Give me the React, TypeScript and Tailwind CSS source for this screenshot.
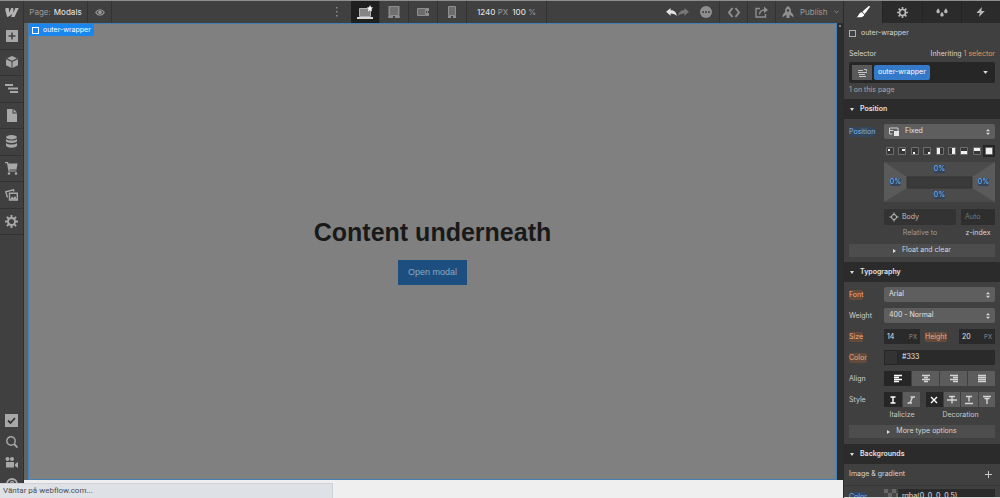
import React from 'react'

type IconProps = { className?: string }

const LogoIcon = () => (
  <svg viewBox="0 0 24 16" className="w-[14px] h-[9px]" fill="#b5b5b5">
    <path d="M24 0 16.400 16H10.500L12.800 9.500C10.800 12.700 7.500 15.200 3.200 16L0 3C0 1 1 0 2 0H6.200L7 8.600 10.500 0H14.300L14.500 8.600 18 0z" />
  </svg>
)

const EyeIcon = () => (
  <svg viewBox="0 0 20 14" className="w-[10px] h-[7px]" fill="none" stroke="#9a9a9a" strokeWidth="2.400">
    <path d="M1.500 7C4 3 7 1.500 10 1.500S16 3 18.500 7C16 11 13 12.500 10 12.500S4 11 1.500 7z" />
    <circle cx="10" cy="6.500" r="2.500" fill="#9a9a9a" />
  </svg>
)

const DotsIcon = () => (
  <svg viewBox="0 0 4 12" className="w-1 h-3" fill="#8a8a8a">
    <path d="M1 1h1.500v1.500H1zM1 5h1.500v1.500H1zM1 9h1.500v1.500H1z" />
  </svg>
)

const LaptopIcon = () => (
  <svg viewBox="0 0 16 16" className="w-4 h-4">
    <path d="M2.500 4.500h11v8h-11z" fill="#858585" stroke="#b0b0b0" />
    <path d="M0 13h16v2H0z" fill="#d8d8d8" />
    <path d="M13 1l1 2.200 2 .3-1.500 1.600.4 2.300L13 6.300l-2 1.100.4-2.300L10 3.500l2-.3z" fill="#fff" />
  </svg>
)

const TabletIcon = () => (
  <svg viewBox="0 0 12 12" className="w-3 h-3">
    <path d="M1.500.5h9v9h-9z" fill="#707070" stroke="#8e8e8e" />
    <path d="M.5 0h1v12h-1zM10.500 0h1v12h-1z" fill="#8e8e8e" />
    <path d="M.5 10H5v2H.5zM7 10h4.500v2H7z" fill="#8e8e8e" />
  </svg>
)

const LandscapeIcon = () => (
  <svg viewBox="0 0 12 8" className="w-3 h-2">
    <path d="M.5.500h8v7h-8z" fill="#6c6c6c" stroke="#8e8e8e" />
    <path d="M9 0h3v3H9zM9 5h3v3H9z" fill="#8e8e8e" />
    <path d="M10 3h1v2h-1z" fill="#8e8e8e" />
  </svg>
)

const PhoneIcon = () => (
  <svg viewBox="0 0 8 12" className="w-2 h-3">
    <path d="M.5.500h7v9h-7z" fill="#6c6c6c" stroke="#8e8e8e" />
    <path d="M0 10h3v2H0zM5 10h3v2H5z" fill="#8e8e8e" />
  </svg>
)

const UndoIcon = ({ className }: IconProps) => (
  <svg viewBox="0 0 12 10" className={`w-[11px] h-[9px] ${className}`} fill="currentColor">
    <path d="M5 0v2.500c4 0 6.500 2 7 6.500C10.500 7 8.500 6 5 6v2.500L0 4.200z" />
  </svg>
)

const MoreIcon = () => (
  <svg viewBox="0 0 12 12" className="w-3 h-3">
    <circle cx="6" cy="6" r="6" fill="#8e8e8e" />
    <path d="M2.300 5.200h1.700v1.700H2.300zM5.200 5.200h1.700v1.700H5.200zM8.100 5.200h1.700v1.700H8.100z" fill="#404040" />
  </svg>
)

const CodeIcon = () => (
  <svg viewBox="0 0 14 11" className="w-[14px] h-[11px]" fill="none" stroke="#8e8e8e" strokeWidth="2">
    <path d="M5.500 1 2 5.500 5.500 10M8.500 1 12 5.500 8.500 10" />
  </svg>
)

const ShareIcon = () => (
  <svg viewBox="0 0 13 12" className="w-[13px] h-3" fill="none" stroke="#8e8e8e" strokeWidth="1.400">
    <path d="M5 2.500H1v8.500h9.500V8" />
    <path d="M4.500 8.500C4.800 5.500 6.500 4 9.500 4" />
    <path d="M9 .5 13 4 9 7.300z" fill="#8e8e8e" stroke="none" />
  </svg>
)

const RocketIcon = () => (
  <svg viewBox="0 0 12 12" className="w-3 h-3" fill="#8e8e8e">
    <path d="M6 0C8 1.200 9 3 9 5v1l2.500 3v2.500L9 9.500 7.500 9v3h-3V9L3 9.500.5 11.500V9L3 6V5c0-2 1-3.800 3-5z" />
    <circle cx="6" cy="4.500" r="1.200" fill="#404040" />
  </svg>
)

const BrushIcon = () => (
  <svg viewBox="0 0 14 12" className="w-[14px] h-3" fill="#fff">
    <path d="M13.500 0 14 .8 8.800 8 6.300 5.800 12.500.2z" />
    <path d="M5.800 6.200 8.300 8.500c0 2-2.800 3.300-7.800 2.700C3 10 2.500 6.600 5.800 6.200z" />
  </svg>
)

const GearIcon = ({ className }: IconProps) => (
  <svg viewBox="0 0 24 24" className={className} fill="none" stroke="currentColor">
    <circle cx="12" cy="12" r="6.500" strokeWidth="3.600" />
    <path
      strokeWidth="3.600"
      d="M12 0v5M12 19v5M0 12h5M19 12h5M3.500 3.500 7 7M17 17l3.500 3.500M20.500 3.500 17 7M7 17l-3.500 3.500"
    />
  </svg>
)

const DropsIcon = () => (
  <svg viewBox="0 0 14 10" className="w-3 h-[9px]" fill="#b8b8b8">
    <path d="M2.500 0C3.500 1.500 4.500 2.600 4.500 4a2 2 0 0 1-4 0C.5 2.600 1.500 1.500 2.500 0z" />
    <path d="M7 4c1 1.500 2 2.500 2 3.800a2 2 0 0 1-4 0C5 6.500 6 5.500 7 4z" />
    <path d="M11.500 0c1 1.500 2 2.600 2 4a2 2 0 0 1-4 0c0-1.400 1-2.500 2-4z" />
  </svg>
)

const BoltIcon = () => (
  <svg viewBox="0 0 10 11" className="w-[9px] h-[10px]" fill="#b8b8b8">
    <path d="M6.500 0 .5 6.500h3.700L3.300 11 9.800 4.500H6z" />
  </svg>
)

const AddIcon = () => (
  <svg viewBox="0 0 12 12" className="w-3 h-3">
    <path d="M0 0h12v12H0z" fill="#a8a8a8" />
    <path d="M6 2.500v7M2.500 6h7" stroke="#404040" strokeWidth="1.500" />
  </svg>
)

const CubeIcon = () => (
  <svg viewBox="0 0 12 12" className="w-3 h-3" fill="#a8a8a8">
    <path d="M6 0l5 2.300L6 4.700 1 2.300z" />
    <path d="M0 3.300l5.500 2.500V12L0 9.300zM12 3.300 6.500 5.800V12L12 9.300z" />
  </svg>
)

const NavigatorIcon = () => (
  <svg viewBox="0 0 13 9" className="w-[13px] h-[9px]" fill="#a8a8a8">
    <path d="M0 0h8v2H0zM3 3.500h10v2H3zM5 7h8v2H5z" />
  </svg>
)

const PageIcon = () => (
  <svg viewBox="0 0 10 13" className="w-[10px] h-[13px]" fill="#a8a8a8">
    <path d="M0 0h5.500v4.500H10V13H0z" />
    <path d="M6.500 0 10 3.500H6.500z" />
  </svg>
)

const DatabaseIcon = () => (
  <svg viewBox="0 0 11 13" className="w-[11px] h-[13px]" fill="#a8a8a8">
    <ellipse cx="5.500" cy="2.200" rx="5.500" ry="2.200" />
    <path d="M0 4c2 2 9 2 11 0v2.200c-1 2.300-10 2.300-11 0z" />
    <path d="M0 8c2 2 9 2 11 0v2.500c-1 3-10 3-11 0z" />
  </svg>
)

const CartIcon = () => (
  <svg viewBox="0 0 13 13" className="w-[13px] h-[13px]" fill="#a8a8a8">
    <path d="M0 0h3l.5 1.500H12.500L11.500 7.500H4.500L4.700 8.500H11.500V9.500H3.500L2 1.300H0z" />
    <circle cx="4" cy="11.500" r="1.300" />
    <circle cx="11" cy="11.500" r="1.300" />
  </svg>
)

const AssetsIcon = () => (
  <svg viewBox="0 0 13 12" className="w-[13px] h-3" fill="none" stroke="#a8a8a8" strokeWidth="1.400">
    <path d="M4.500 4.200h7.800v6.800H4.500z" />
    <path d="M2.500 8.500.8 2.800 8.500.8l.5 1.700" />
    <path d="M5 10.500l2-3 1.500 1.500 1.500-2 2 3.500z" fill="#a8a8a8" stroke="none" />
  </svg>
)

const CheckIcon = () => (
  <svg viewBox="0 0 13 13" className="w-[13px] h-[13px]">
    <path d="M0 0h13v13H0z" fill="#a8a8a8" />
    <path d="M3 6.500 5.500 9 10 4" fill="none" stroke="#333" strokeWidth="1.800" />
  </svg>
)

const SearchIcon = () => (
  <svg viewBox="0 0 12 12" className="w-3 h-3" fill="none" stroke="#a8a8a8" strokeWidth="1.400">
    <circle cx="5" cy="5" r="4.200" />
    <path d="M8 8l3.500 3.500" strokeWidth="1.800" />
  </svg>
)

const CameraIcon = () => (
  <svg viewBox="0 0 13 11" className="w-[13px] h-[11px]" fill="#a8a8a8">
    <circle cx="2.500" cy="2" r="2" />
    <circle cx="7" cy="2" r="2" />
    <path d="M1 5h8v5.500H1zM10 7l3-2v6l-3-2z" />
  </svg>
)

const HelpIcon = () => (
  <svg viewBox="0 0 12 12" className="w-3 h-3" fill="none" stroke="#a8a8a8">
    <circle cx="6" cy="6" r="5" strokeWidth="2" />
    <path d="M4.500 5c0-2 3-2 3 0 0 1-1.500 1-1.500 2.500" strokeWidth="1.300" />
  </svg>
)

const PositionIcon = () => (
  <svg viewBox="0 0 10 9" className="w-[10px] h-[9px]">
    <path d="M.5 1h8.500v3M.5 1v6h3M.5 3.500h4" fill="none" stroke="#cfcfcf" />
    <path d="M5 4h5v5H5z" fill="#e6e6e6" />
  </svg>
)

const SelectorIcon = () => (
  <svg viewBox="0 0 9 8" className="w-[9px] h-2" fill="none" stroke="#c4c4c4">
    <path d="M0 1.500h5M0 3.500h9M1 5.500h6M1 7.500h7" />
    <path d="M6 .5h2.500v2" />
  </svg>
)

const ArrowsIcon = () => (
  <svg viewBox="0 0 4 6" className="w-1 h-[6px] shrink-0" fill="#d8d8d8">
    <path d="M2 0l2 2.300H0zM2 6 0 3.700h4z" />
  </svg>
)

const leftItems = [
  { name: 'Add', icon: <AddIcon /> },
  { name: 'Symbols', icon: <CubeIcon /> },
  { name: 'Navigator', icon: <NavigatorIcon /> },
  { name: 'Pages', icon: <PageIcon /> },
  { name: 'CMS', icon: <DatabaseIcon /> },
  { name: 'Ecommerce', icon: <CartIcon /> },
  { name: 'Assets', icon: <AssetsIcon /> },
  { name: 'Settings', icon: <GearIcon className="w-[13px] h-[13px] text-[#a8a8a8]" /> },
]

const bottomItems = [
  { name: 'Audit', icon: <CheckIcon /> },
  { name: 'Search', icon: <SearchIcon /> },
  { name: 'Videos', icon: <CameraIcon /> },
  { name: 'Help', icon: <HelpIcon /> },
]

const devices = [
  { name: 'Desktop', icon: <LaptopIcon /> },
  { name: 'Tablet', icon: <TabletIcon /> },
  { name: 'Mobile landscape', icon: <LandscapeIcon /> },
  { name: 'Mobile portrait', icon: <PhoneIcon /> },
]

const panelTabs = [
  { name: 'Style', icon: <BrushIcon /> },
  { name: 'Element settings', icon: <GearIcon className="w-[11px] h-[11px] text-[#b8b8b8]" /> },
  { name: 'Style manager', icon: <DropsIcon /> },
  { name: 'Interactions', icon: <BoltIcon /> },
]

// filled part of each position preset
const presets = [
  { name: 'Top left', d: 'M2 2h2v2H2z' },
  { name: 'Top right', d: 'M4 2h3v2H4z' },
  { name: 'Bottom left', d: 'M2 5h2v2H2z' },
  { name: 'Bottom right', d: 'M5 5h2v2H5z' },
  { name: 'Left', d: 'M1 1h3v6H1z' },
  { name: 'Right', d: 'M4 1h3v6H4z' },
  { name: 'Bottom', d: 'M1 4h6v3H1z' },
  { name: 'Top', d: 'M1 1h6v3H1z' },
  { name: 'Full', d: 'M1 1h6v6H1z' },
]

const aligns = [
  { name: 'Left', d: 'M0 .5h8M0 2.500h5M0 4.500h8M0 6.500h5' },
  { name: 'Center', d: 'M0 .5h8M2 2.500h4M0 4.500h8M2 6.500h4' },
  { name: 'Right', d: 'M0 .5h8M3 2.500h5M0 4.500h8M3 6.500h5' },
  { name: 'Justify', d: 'M0 .5h8M0 2.500h8M0 4.500h8M0 6.500h8' },
]

const italics = [
  { name: 'Regular', d: 'M1.500 1h5M4 1v6M1.500 7h5' },
  { name: 'Italic', d: 'M3.500 1H8M5.500 1 3 7M.5 7H5' },
]

const decorations = [
  { name: 'None', d: 'M1 1l6 6M7 1 1 7' },
  { name: 'Strikethrough', d: 'M1 .5h6M4 .5v7M-1 4h10' },
  { name: 'Underline', d: 'M1 .5h6M4 .5v5M0 7.500h8' },
  { name: 'Overline', d: 'M0 .5h8M1.500 2.500h5M4 2.500V8' },
]

const IconGroup = ({ items, active = 0, label }: { items: { name: string; d: string }[]; active?: number; label: string }) => (
  <div role="group" aria-label={label} className="flex w-full h-full gap-px">
    {items.map((item, i) => (
      <button
        key={item.name}
        aria-label={item.name}
        className={`flex flex-1 items-center justify-center ${i === active ? 'bg-[#262626]' : 'bg-[#5c5c5c]'}`}
      >
        <svg viewBox="0 0 8 8" className="w-2 h-2 overflow-visible" fill="none" stroke={i === active ? '#fff' : '#d4d4d4'} strokeWidth="1.400">
          <path d={item.d} />
        </svg>
      </button>
    ))}
  </div>
)

const SectionHeader = ({ title }: { title: string }) => (
  <h2>
    <button className="flex w-full h-5 items-center gap-[6px] bg-[#2b2b2b] px-[6px] text-[7px] font-semibold text-[#e2e2e2]">
      <svg viewBox="0 0 4 3" className="w-1 h-[3px]" fill="#ddd"><path d="M0 0h4L2 3z" /></svg>
      {title}
    </button>
  </h2>
)

const MoreButton = ({ title }: { title: string }) => (
  <button className="flex w-full h-[13px] items-center justify-center gap-[6px] bg-[#4d4d4d] text-[7px] text-[#d6d6d6]">
    <svg viewBox="0 0 3 4" className="w-[3px] h-1" fill="#ddd"><path d="M0 0v4l3-2z" /></svg>
    {title}
  </button>
)

const Label = ({ htmlFor, color, children }: { htmlFor?: string; color?: 'blue' | 'orange'; children: string }) => {
  const tint =
    color === 'blue' ? 'bg-[#32465c] text-[#80b4ee]' : color === 'orange' ? 'bg-[#644a3a] text-[#f0a67c]' : 'text-[#cfcfcf]'
  return (
    <label htmlFor={htmlFor} className={`rounded-xs leading-[10px] ${tint}`}>
      {children}
    </label>
  )
}

const Row = ({ label, children }: { label: React.ReactNode; children: React.ReactNode }) => (
  <div className="flex h-[15px] items-center">
    <div className="w-[35px] shrink-0 flex">{label}</div>
    <div className="flex flex-1 min-w-0 h-full">{children}</div>
  </div>
)

const SelectBox = ({ id, value, icon }: { id: string; value: string; icon?: React.ReactNode }) => (
  <div className="flex flex-1 min-w-0 items-center gap-[6px] rounded-xs bg-[#5e5e5e] px-[5px] text-[#e2e2e2]">
    {icon}
    <select id={id} className="flex-1 min-w-0 h-full appearance-none bg-transparent outline-none">
      <option>{value}</option>
    </select>
    <ArrowsIcon />
  </div>
)

const NumberBox = ({ id, value }: { id: string; value: string }) => (
  <div className="flex w-9 items-center bg-[#2a2a2a] px-[3px]">
    <input id={id} defaultValue={value} className="flex-1 min-w-0 h-full bg-transparent text-[#e2e2e2] outline-none" />
    <span className="text-[6px] text-[#8c8c8c]">PX</span>
  </div>
)

const TopBar = () => (
  <header className="flex flex-1 min-w-0 items-stretch bg-[#404040] text-[#9b9b9b]">
    <a href="#" aria-label="Dashboard" className="flex w-6 items-center justify-center border-r border-[#333]">
      <LogoIcon />
    </a>
    <button className="flex w-16 items-center justify-center gap-[3px] border-r border-[#333]">
      Page: <span className="font-medium text-[#dcdcdc]">Modals</span>
    </button>
    <button aria-label="Preview" className="flex w-6 items-center justify-center border-r border-[#333]">
      <EyeIcon />
    </button>
    <div className="flex flex-1 justify-end">
      <button aria-label="More breakpoints" className="flex w-7 items-center justify-center">
        <DotsIcon />
      </button>
      {devices.map((device, i) => (
        <button
          key={device.name}
          aria-label={device.name}
          className={`flex w-[29px] items-center justify-center border-r border-[#333] ${i === 0 ? 'bg-[#1f1f1f]' : ''}`}
        >
          {device.icon}
        </button>
      ))}
      <button className="flex w-20 items-center justify-center gap-1 border-r border-[#333]">
        <span><span className="font-medium text-[#dcdcdc]">1240</span> PX</span>
        <span><span className="font-medium text-[#dcdcdc]">100</span> %</span>
      </button>
    </div>
    <div className="flex w-[296px] justify-end">
      <div className="flex w-8 items-center gap-px pl-[6px]">
        <button aria-label="Undo"><UndoIcon className="text-[#e4e4e4]" /></button>
        <button aria-label="Redo"><UndoIcon className="-scale-x-100 text-[#777]" /></button>
      </div>
      <button aria-label="Status" className="flex w-7 items-center justify-center border-r border-[#333]"><MoreIcon /></button>
      <button aria-label="Export code" className="flex w-7 items-center justify-center border-r border-[#333]"><CodeIcon /></button>
      <button aria-label="Share" className="flex w-7 items-center justify-center border-r border-[#333]"><ShareIcon /></button>
      <button className="flex w-[67px] items-center gap-[6px] pl-[6px]">
        <RocketIcon />
        Publish
        <svg viewBox="0 0 6 4" className="w-[5px] h-1" fill="none" stroke="#9b9b9b"><path d="M.5.500 3 3 5.500.5" /></svg>
      </button>
    </div>
  </header>
)

const LeftBar = () => (
  <nav className="flex w-6 shrink-0 flex-col justify-between border-r border-[#2a3036] bg-[#404040]">
    <div className="flex h-[212px] flex-col">
      {leftItems.map((item) => (
        <button key={item.name} aria-label={item.name} className="flex flex-1 items-center justify-center border-b border-[#333]">
          {item.icon}
        </button>
      ))}
    </div>
    <div className="flex flex-col pb-1">
      {bottomItems.map((item) => (
        <button key={item.name} aria-label={item.name} className="flex h-[21px] items-center justify-center">
          {item.icon}
        </button>
      ))}
    </div>
  </nav>
)

const Canvas = () => (
  <div className="flex flex-1 min-w-0 flex-col">
    <div className="flex flex-1 min-h-0 bg-[#646464] pl-1">
      <main className="relative flex flex-1 flex-col items-center justify-center gap-3 border border-[#4480b5] bg-[#808080] pb-[2px] font-['Liberation_Sans',sans-serif]">
        <div className="absolute left-0 top-0 flex h-3 items-center gap-1 bg-[#1a86ee] px-[3px] font-[Inter,sans-serif] text-[7px] text-white">
          <span className="w-[7px] h-[7px] border border-white" />
          outer-wrapper
        </div>
        <h1 className="text-[25px] leading-8 font-bold text-[#191919]">Content underneath</h1>
        <button className="h-[25px] bg-[#1c4f7f] px-[10px] text-[9px] text-[#8ea7bf]">Open modal</button>
      </main>
      <div className="flex w-[6px] justify-center bg-[#2b2d2e] pt-[2px]">
        <span className="w-[2px] h-[2px] bg-[#777]" />
      </div>
    </div>
    <div className="h-[18px] shrink-0 bg-[#efefef]" />
  </div>
)

const InsetBox = () => (
  <div className="relative h-10">
    <svg viewBox="0 0 111 40" preserveAspectRatio="none" className="w-full h-full">
      <path d="M0 0h111v40H0z" fill="#4b4b4b" />
      <path d="M0 0l23 15v11L0 40zM111 0 88 15v11l23 14z" fill="#5a5a5a" />
      <path d="M23 15h65v11H23z" fill="#3a3a3a" stroke="#333" />
    </svg>
    <div className="absolute inset-0 grid grid-cols-[23px_1fr_23px] grid-rows-[14px_12px_14px] place-items-center leading-[8px] text-[#86b8ee]">
      <button className="col-start-2 rounded-xs bg-[#30455c]">0%</button>
      <button className="col-start-1 row-start-2 rounded-xs bg-[#30455c]">0%</button>
      <button className="col-start-3 row-start-2 rounded-xs bg-[#30455c]">0%</button>
      <button className="col-start-2 row-start-3 rounded-xs bg-[#30455c]">0%</button>
    </div>
  </div>
)

const StylePanel = () => (
  <aside className="flex w-[157px] shrink-0 flex-col border-l border-[#2b2b2b] bg-[#404040] text-[7px]">
    <div className="flex h-[22px] shrink-0 bg-[#2b2b2b]">
      {panelTabs.map((tab, i) => (
        <button key={tab.name} aria-label={tab.name} className={`flex flex-1 items-center justify-center ${i === 0 ? 'bg-[#404040]' : 'border-l border-[#242424]'}`}>
          {tab.icon}
        </button>
      ))}
    </div>
    <div className="flex-1 min-h-0 overflow-hidden">
      <div className="flex h-[76px] flex-col px-[5px] pt-[5px]">
        <div className="flex h-[10px] items-center gap-[5px] text-[#d6d6d6]">
          <span className="w-[7px] h-[7px] border border-[#b0b0b0]" />
          outer-wrapper
        </div>
        <div className="mt-[11px] flex h-[10px] items-center justify-between text-[#d6d6d6]">
          <label htmlFor="selector">Selector</label>
          <span>Inheriting <a href="#" className="text-[#e8935a]">1 selector</a></span>
        </div>
        <div className="mt-[3px] flex h-[21px] items-center gap-[2px] rounded-xs bg-[#262626] pl-[3px] pr-[7px]">
          <button aria-label="States" className="flex w-5 h-[15px] items-center justify-center bg-[#5a5a5a]"><SelectorIcon /></button>
          <button id="selector" className="h-[15px] rounded-xs bg-[#3579c9] px-1 text-white">outer-wrapper</button>
          <svg viewBox="0 0 6 4" className="ml-auto w-[5px] h-[3px]" fill="#ddd"><path d="M0 0h6L3 4z" /></svg>
        </div>
        <p className="mt-[2px] leading-[10px] text-[#a8a8a8]">1 on this page</p>
      </div>

      <SectionHeader title="Position" />
      <div className="px-[5px] py-[5px]">
        <Row label={<Label htmlFor="position" color="blue">Position</Label>}>
          <SelectBox id="position" value="Fixed" icon={<PositionIcon />} />
        </Row>
        <div className="ml-[35px] mt-[6px] flex h-3 items-center justify-between">
          {presets.map((preset, i) => (
            <button
              key={preset.name}
              aria-label={preset.name}
              className={`flex w-3 h-3 items-center justify-center ${i === 8 ? 'bg-[#262626]' : ''}`}
            >
              <svg viewBox="0 0 8 8" className="w-2 h-2">
                <path d="M.5.500h7v7h-7z" fill="#363636" stroke="#6e6e6e" />
                <path d={preset.d} fill="#f0f0f0" />
              </svg>
            </button>
          ))}
        </div>
        <div className="ml-[35px] mt-[5px]">
          <InsetBox />
          <div className="mt-[7px] flex gap-[5px] text-center leading-[16px]">
            <div className="flex-1">
              <button className="flex w-full h-4 items-center gap-1 bg-[#333] px-[6px] text-[#bdbdbd]">
                <svg viewBox="0 0 8 8" className="w-2 h-2 overflow-visible" fill="none" stroke="#c4c4c4">
                  <circle cx="4" cy="4" r="2.500" />
                  <path d="M4-.5V2M4 6v2.500M-.5 4H2M6 4h2.500" />
                </svg>
                Body
              </button>
              <span className="block text-[#9c9c9c]">Relative to</span>
            </div>
            <div className="w-[34px]">
              <input id="zindex" placeholder="Auto" className="block w-full h-4 bg-[#2e2e2e] px-1 placeholder:text-[#777] outline-none" />
              <label htmlFor="zindex" className="block text-[#d6d6d6]">z-index</label>
            </div>
          </div>
        </div>
        <div className="mt-[3px]">
          <MoreButton title="Float and clear" />
        </div>
      </div>

      <SectionHeader title="Typography" />
      <div className="px-[5px] pt-[5px] pb-[6px]">
        <div className="flex flex-col gap-[6px]">
          <Row label={<Label htmlFor="font" color="orange">Font</Label>}>
            <SelectBox id="font" value="Arial" />
          </Row>
          <Row label={<Label htmlFor="weight">Weight</Label>}>
            <SelectBox id="weight" value="400 - Normal" />
          </Row>
          <Row label={<Label htmlFor="size" color="orange">Size</Label>}>
            <div className="flex flex-1 justify-between">
              <NumberBox id="size" value="14" />
              <div className="flex flex-1 items-center pl-[5px]"><Label htmlFor="height" color="orange">Height</Label></div>
              <NumberBox id="height" value="20" />
            </div>
          </Row>
          <Row label={<Label htmlFor="color" color="orange">Color</Label>}>
            <span className="w-[14px] border border-[#262626] bg-[#333]" />
            <input id="color" defaultValue="#333" className="flex-1 min-w-0 bg-[#2a2a2a] px-1 text-[#e2e2e2] outline-none" />
          </Row>
          <Row label={<Label>Align</Label>}>
            <IconGroup label="Align" items={aligns} />
          </Row>
          <Row label={<Label>Style</Label>}>
            <div className="flex flex-1 gap-[6px]">
              <div className="w-9"><IconGroup label="Italicize" items={italics} /></div>
              <div className="flex-1"><IconGroup label="Decoration" items={decorations} /></div>
            </div>
          </Row>
        </div>
        <div className="ml-[35px] flex gap-[6px] text-center leading-[15px] text-[#c8c8c8]">
          <span className="w-9">Italicize</span>
          <span className="flex-1">Decoration</span>
        </div>
        <div className="mt-[3px]">
          <MoreButton title="More type options" />
        </div>
      </div>

      <SectionHeader title="Backgrounds" />
      <div className="flex h-[22px] items-center justify-between border-b border-[#363636] px-[5px] text-[#d6d6d6]">
        Image &amp; gradient
        <button aria-label="Add background" className="px-[3px]">
          <svg viewBox="0 0 7 7" className="w-[7px] h-[7px]" stroke="#c8c8c8"><path d="M3.500 0v7M0 3.500h7" /></svg>
        </button>
      </div>
      <div className="px-[5px] pt-[3px]">
        <Row label={<Label htmlFor="bgcolor" color="blue">Color</Label>}>
          <svg viewBox="0 0 14 15" className="w-[14px] h-full">
            <path d="M0 0h14v15H0z" fill="#444" />
            <path d="M0 0h4v4H0zM8 0h4v4H8zM4 4h4v4H4zM12 4h2v4h-2z" fill="#666" />
          </svg>
          <input id="bgcolor" defaultValue="rgba(0, 0, 0, 0.5)" className="flex-1 min-w-0 bg-[#2a2a2a] px-1 text-[#e2e2e2] outline-none" />
        </Row>
      </div>
    </div>
    <div className="h-px shrink-0 bg-[#d8d8d8]" />
  </aside>
)

const App = () => {
  return (
    <div className="relative flex h-screen overflow-hidden border-t border-[#8c908c] bg-[#404040] font-[Inter,sans-serif] text-[8px]">
      <div className="flex flex-1 min-w-0 flex-col">
        <div className="flex h-[22px] shrink-0">
          <TopBar />
        </div>
        <div className="flex flex-1 min-h-0">
          <LeftBar />
          <Canvas />
        </div>
      </div>
      <StylePanel />
      <div className="absolute bottom-0 left-0 flex w-1/3 h-[15px] items-center border-r border-t border-[#cdd0d4] bg-[#dee1e6] px-[3px] font-[Roboto,sans-serif] text-[8px] text-[#4a4d52]">
        Väntar på webflow.com...
      </div>
    </div>
  )
}

export default App
